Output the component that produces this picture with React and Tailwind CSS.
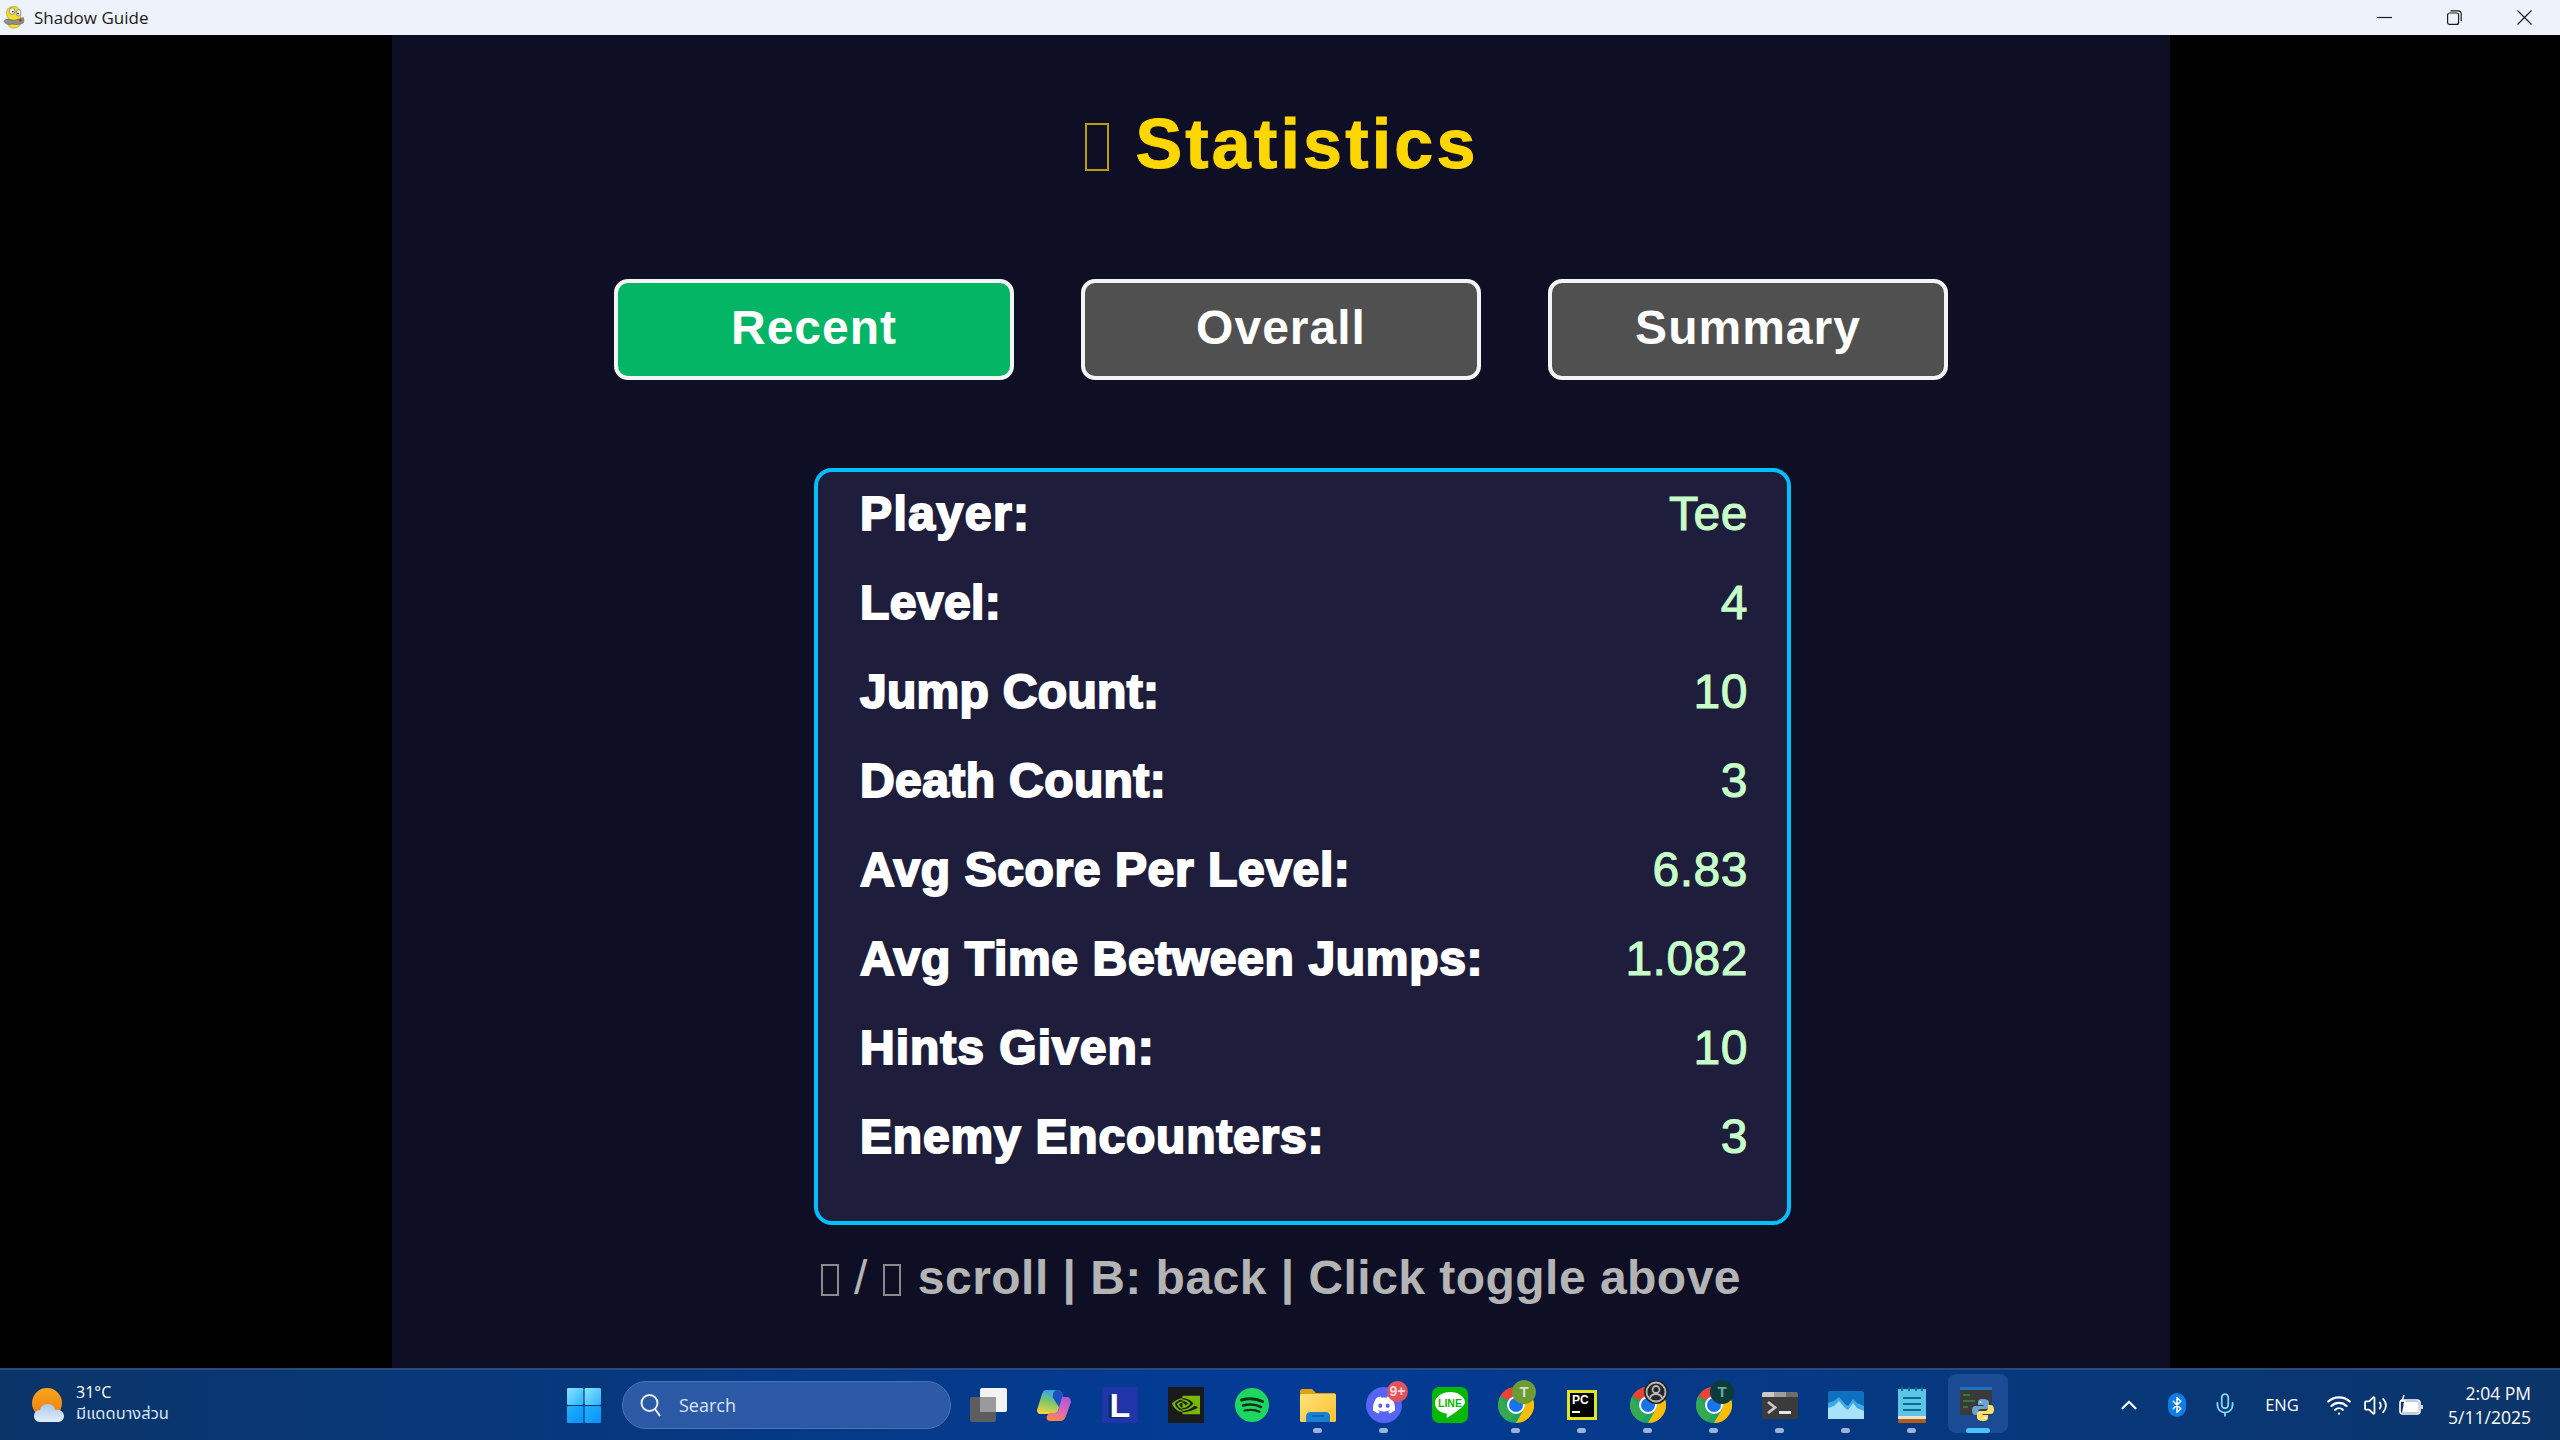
import { Bluetooth, ChevronUp, Mic, Volume2, Wifi } from "lucide-react";
import { FaDiscord } from "react-icons/fa6";
import { SiNvidia } from "react-icons/si";

const stats = [
  ["Player:", "Tee", "tracking-[1.5px]"],
  ["Level:", "4", "tracking-[0.4px]"],
  ["Jump Count:", "10", "tracking-[0.3px]"],
  ["Death Count:", "3", "tracking-[0.4px]"],
  ["Avg Score Per Level:", "6.83", "tracking-[0.6px]"],
  ["Avg Time Between Jumps:", "1.082", "tracking-[0.65px]"],
  ["Hints Given:", "10", "tracking-[1px]"],
  ["Enemy Encounters:", "3", "tracking-[0.8px]"],
];

function PygameLogo() {
  return (
    <svg width="22" height="25" viewBox="0 0 24 26">
      <path d="M5 4c2-3 8-4 11-2 3 2 4 6 3 10 1 4 1 8-2 11-3 2-8 2-10 0-2-3-2-6-1-9C4 11 3 7 5 4z" fill="#f2dc2c" stroke="#b7a21a" strokeWidth="0.8" />
      <ellipse cx="10" cy="6" rx="3" ry="3.6" fill="#fff" stroke="#555" strokeWidth="0.7" />
      <ellipse cx="17" cy="8" rx="2.6" ry="3.4" fill="#fff" stroke="#555" strokeWidth="0.7" />
      <circle cx="10.5" cy="6.5" r="1" fill="#222" />
      <circle cx="16.5" cy="8.5" r="1" fill="#222" />
      <path d="M1 17c2-3 6-2 10-1 4 0 8-2 11-3 1 2 1 4 0 6-4 2-8 2-12 1-3 1-7 1-9-3z" fill="#8c8f8c" stroke="#555" strokeWidth="0.6" />
      <circle cx="19" cy="16" r="1.3" fill="#c22" />
    </svg>
  );
}

function Tofu({ className }) {
  return <span className={`inline-block box-border ${className}`} />;
}

function TitleBar() {
  return (
    <div className="h-[35px] flex items-center bg-[#eef2fa] shrink-0">
      <div className="w-[34px] flex justify-start pl-[3px]">
        <PygameLogo />
      </div>
      <span className="text-[17px] text-[#1a1a1a] font-['Open_Sans',sans-serif]">Shadow Guide</span>
      <div className="ml-auto flex items-center pr-[28px] gap-[55px] text-[#1c1c1c]">
        <svg width="15" height="15" viewBox="0 0 15 15">
          <path d="M0 7.5h15" stroke="currentColor" strokeWidth="1.2" />
        </svg>
        <svg width="15" height="15" viewBox="0 0 15 15" fill="none" stroke="currentColor" strokeWidth="1.2">
          <rect x="0.6" y="3" width="11" height="11.4" rx="2" />
          <path d="M3.5 0.8h7.5a3.2 3.2 0 0 1 3.2 3.2v7" />
        </svg>
        <svg width="15" height="15" viewBox="0 0 15 15">
          <path d="M0.5 0.5l14 14M14.5 0.5l-14 14" stroke="currentColor" strokeWidth="1.2" />
        </svg>
      </div>
    </div>
  );
}

function ToggleButton({ label, active }) {
  return (
    <button
      className={`w-[400px] h-[101px] rounded-[14px] border-[4px] border-[#f4f4f4] text-white text-[48px] font-bold tracking-[1px] pb-[4px] ${
        active ? "bg-[#03b565]" : "bg-[#505050]"
      }`}
    >
      {label}
    </button>
  );
}

function GamePanel() {
  return (
    <div className="flex-1 bg-black flex min-h-0">
      <div className="w-[1778px] ml-[392px] bg-[#0e0f24] flex flex-col font-['Liberation_Sans',sans-serif]">
        {/* TITLE */}
        <div className="h-[218px] pl-[2px] flex items-center justify-center gap-[26px] text-[#ffd700] text-[70px] font-bold tracking-[3.2px] [-webkit-text-stroke:1px_#ffd700]">
          <Tofu className="w-[24px] h-[48px] border-[2px] border-[#b89c08] mt-[6px]" />
          <span>Statistics</span>
        </div>

        {/* TOGGLES */}
        <div className="mt-[26px] flex justify-center gap-[67px]">
          <ToggleButton label="Recent" active />
          <ToggleButton label="Overall" />
          <ToggleButton label="Summary" />
        </div>

        {/* STATS */}
        <div className="mt-[88px] ml-[422px] w-[977px] h-[757px] box-border rounded-[18px] border-[4px] border-[#00bfff] bg-[#1e1e3c] pl-[42px] pr-[39px] flex flex-col">
          {stats.map(([label, value, track], i) => (
            <div key={label} className={`h-[89px] flex items-center justify-between shrink-0 ${i === 0 ? "-mt-[3px]" : ""}`}>
              <span className={`text-[48px] font-bold text-white [-webkit-text-stroke:2px_#ffffff] ${track}`}>{label}</span>
              <span className="text-[48px] text-[#c8ffc8] tracking-[0.5px] [-webkit-text-stroke:1px_#c8ffc8]">{value}</span>
            </div>
          ))}
        </div>

        {/* FOOTER */}
        <div className="h-[100px] pt-[5px] flex items-center justify-center text-[48px] font-bold text-[#b4b4b4] tracking-[0.47px]">
          <Tofu className="w-[18px] h-[32px] border-[2px] border-[#8a8a8a] mt-[4px]" />
          <span className="mx-[15px] font-normal">/</span>
          <Tofu className="w-[18px] h-[32px] border-[2px] border-[#8a8a8a] mt-[4px]" />
          <span className="ml-[17px]">scroll | B: back | Click toggle above</span>
        </div>
      </div>
    </div>
  );
}

function Weather() {
  return (
    <div className="w-[551px] pl-[32px] flex items-center shrink-0">
      <svg width="33" height="34" viewBox="0 0 33 34">
        <defs>
          <linearGradient id="sun" x1="0" y1="0" x2="0" y2="1">
            <stop offset="0" stopColor="#f9a61c" />
            <stop offset="1" stopColor="#f07a12" />
          </linearGradient>
          <linearGradient id="cloud" x1="0" y1="0" x2="0" y2="1">
            <stop offset="0" stopColor="#a9c8ee" />
            <stop offset="1" stopColor="#e3eefb" />
          </linearGradient>
        </defs>
        <ellipse cx="15" cy="15" rx="15" ry="15" fill="url(#sun)" />
        <path d="M8 34c-4 0-6-3-6-6s2-6 6-6c1-4 4-6 8-6s7 3 7 6c5-1 9 2 9 6s-3 6-7 6z" fill="url(#cloud)" />
      </svg>
      <div className="ml-[11px] flex flex-col text-white font-['Open_Sans','Noto_Sans',sans-serif] leading-none">
        <span className="text-[16px] leading-[22px] -mt-[4px]">31°C</span>
        <span className="text-[16.5px] leading-[22px] text-[#d8e4f4] font-['Noto_Sans_Thai','Noto_Sans',sans-serif]">มีแดดบางส่วน</span>
      </div>
    </div>
  );
}

function StartButton() {
  return (
    <div className="w-[66px] flex items-center justify-center shrink-0">
      <svg width="34" height="35" viewBox="0 0 34 35">
        <defs>
          <linearGradient id="winA" x1="0" y1="0" x2="1" y2="1">
            <stop offset="0" stopColor="#8be4ff" />
            <stop offset="1" stopColor="#28b4f8" />
          </linearGradient>
          <linearGradient id="winB" x1="0" y1="0" x2="1" y2="1">
            <stop offset="0" stopColor="#1fb2f7" />
            <stop offset="1" stopColor="#0a8fff" />
          </linearGradient>
        </defs>
        <rect x="0" y="0" width="16.4" height="16.9" rx="1.2" fill="url(#winA)" />
        <rect x="17.6" y="0" width="16.4" height="16.9" rx="1.2" fill="url(#winA)" />
        <rect x="0" y="18.1" width="16.4" height="16.9" rx="1.2" fill="url(#winB)" />
        <rect x="17.6" y="18.1" width="16.4" height="16.9" rx="1.2" fill="url(#winB)" />
      </svg>
    </div>
  );
}

function SearchBox() {
  return (
    <div className="ml-[5px] w-[329px] h-[48px] rounded-full bg-[#2c5aa6] border border-[#4a73b5] flex items-center pl-[17px] shrink-0">
      <svg width="22" height="24" viewBox="0 0 22 24" fill="none" stroke="#e6eefb" strokeWidth="2">
        <circle cx="9.5" cy="10" r="8" />
        <path d="M15 16l5 7" />
      </svg>
      <span className="ml-[17px] text-[18px] text-[#dce6f6] font-['Open_Sans',sans-serif]">Search</span>
    </div>
  );
}

function TaskView() {
  return (
    <svg width="37" height="35" viewBox="0 0 37 35">
      <rect x="0" y="9" width="26" height="25" rx="2" fill="#5d5d60" />
      <rect x="10" y="0" width="27" height="24" rx="2" fill="#f3f3f3" />
      <rect x="10" y="9" width="16" height="15" fill="#9a9a9c" />
    </svg>
  );
}

function Copilot() {
  return (
    <svg width="34" height="31" viewBox="0 0 34 31">
      <defs>
        <linearGradient id="copA" x1="0.6" y1="0" x2="0.3" y2="1">
          <stop offset="0" stopColor="#2aa1f2" />
          <stop offset="0.5" stopColor="#7cc96a" />
          <stop offset="1" stopColor="#f5d23a" />
        </linearGradient>
        <linearGradient id="copB" x1="0.6" y1="0" x2="0.3" y2="1">
          <stop offset="0" stopColor="#b058d8" />
          <stop offset="0.6" stopColor="#e56ab0" />
          <stop offset="1" stopColor="#f78a3a" />
        </linearGradient>
      </defs>
      <path d="M9 0h11c3 0 5 2 6 5l-5 16c-1 2-3 3-5 3H3c-2 0-3-2-3-4L5 4c1-2 2-4 4-4z" fill="url(#copA)" />
      <path d="M24 7h6c3 0 4 3 4 5l-5 14c-1 3-3 5-6 5H13c-3 0-4-3-3-5l2-3h5c3 0 4-2 5-4z" fill="url(#copB)" />
      <path d="M20 0c3 0 5 2 6 5l-4 12-6-9c-1-4 1-8 4-8z" fill="#1c4fc0" />
    </svg>
  );
}

function LTile() {
  return (
    <div className="w-[36px] h-[36px] bg-[#2036a8] flex items-center justify-center text-white text-[34px] font-bold font-['Liberation_Sans',sans-serif] leading-none [text-shadow:-3px_1px_0_#0d2a5c]">
      L
    </div>
  );
}

function NvidiaTile() {
  return (
    <div className="w-[36px] h-[36px] bg-[#1a1a1a] flex items-center justify-center text-[#76b900]">
      <SiNvidia size={28} />
    </div>
  );
}

function Spotify() {
  return (
    <svg width="34" height="34" viewBox="0 0 34 34" fill="none" stroke="#14301c" strokeLinecap="round">
      <circle cx="17" cy="17" r="17" fill="#1ed760" stroke="none" />
      <path d="M6.5 12c7-2 15-1.5 21 1.5" strokeWidth="3" />
      <path d="M8 17.5c6-1.5 13-1 18 1.5" strokeWidth="2.6" />
      <path d="M9.5 22.5c5-1 11-.8 15 1.2" strokeWidth="2.2" />
    </svg>
  );
}

function Folder() {
  return (
    <svg width="36" height="33" viewBox="0 0 36 33">
      <defs>
        <linearGradient id="fold" x1="0" y1="0" x2="1" y2="1">
          <stop offset="0" stopColor="#ffe27a" />
          <stop offset="1" stopColor="#fcc02e" />
        </linearGradient>
      </defs>
      <path d="M0 2c0-1 1-2 2-2h10l4 4h18c1 0 2 1 2 2v2H0z" fill="#e0a213" />
      <rect x="0" y="5" width="36" height="28" rx="1.5" fill="url(#fold)" />
      <path d="M6 33v-6c0-2 2-4 4-4h16c2 0 4 2 4 4v6z" fill="#1a82d0" />
      <path d="M12 27h12" stroke="#0d5c9e" strokeWidth="1.5" />
    </svg>
  );
}

function Discord() {
  return (
    <div className="relative w-[36px] h-[36px] rounded-full bg-[#5865f2] flex items-center justify-center text-white">
      <FaDiscord size={24} />
      <span className="absolute -top-[6px] -right-[6px] w-[21px] h-[21px] rounded-full bg-[#e3535a] text-[#ffd9d9] text-[14px] font-bold leading-[20px] text-center font-['Liberation_Sans',sans-serif]">
        9+
      </span>
    </div>
  );
}

function LineTile() {
  return (
    <svg width="36" height="36" viewBox="0 0 36 36">
      <rect width="36" height="36" rx="7" fill="#06b900" />
      <path d="M18 5C9.5 5 3 10 3 16c0 5.5 4.5 9.5 11 10.500.8.2 1 .5.8 1.300l-.2 2.200c0 .5.3.8 1 .4 5-3 12-7.500 15.400-11.400C32.500 17 33 16 33 15.500 33 10 26.500 5 18 5z" fill="#fff" />
      <text x="18" y="20" textAnchor="middle" fontSize="10.5" fontWeight="700" fill="#06b900" fontFamily="Liberation Sans, sans-serif">LINE</text>
    </svg>
  );
}

function Chrome({ badge, badgeText, textColor = "#d6e0c8", ring }) {
  return (
    <div className="relative w-[36px] h-[36px]">
      <svg width="36" height="36" viewBox="0 0 36 36">
        <circle cx="18" cy="18" r="18" fill="#1da462" />
        <path d="M18 0a18 18 0 0 1 15.590 9H18a9 9 0 0 0-7.800 4.500L2.410 9A18 18 0 0 1 18 0z" fill="#ea4335" />
        <path d="M2.410 9l7.800 13.500A9 9 0 0 0 18 27l-7.800 7.100A18 18 0 0 1 2.410 9z" fill="#34a853" />
        <path d="M33.590 9A18 18 0 0 1 18 36l7.800-13.500A9 9 0 0 0 18 9z" fill="#fbbc04" />
        <circle cx="18" cy="18" r="9" fill="#fff" />
        <circle cx="18" cy="18" r="7" fill="#1a73e8" />
      </svg>
      <span
        className="absolute -top-[7px] left-[14px] w-[24px] h-[24px] rounded-full flex items-center justify-center text-[15px] font-bold font-['Liberation_Sans',sans-serif]"
        style={{ background: badge, color: textColor }}
      >
        {badgeText}
        {ring && (
          <svg width="22" height="22" viewBox="0 0 22 22" fill="none" stroke="#b9b9b9" strokeWidth="1.8">
            <circle cx="11" cy="11" r="9.5" />
            <circle cx="11" cy="8.5" r="3.5" />
            <path d="M5 17c1-3 3.500-4 6-4s5 1 6 4" />
          </svg>
        )}
      </span>
    </div>
  );
}

function PyCharm() {
  return (
    <div className="w-[30px] h-[30px] bg-[#e2e51e] p-[3px]">
      <div className="w-full h-full bg-black flex flex-col pl-[2px] pt-[1px] text-white text-[12px] font-bold leading-[13px] font-['Liberation_Sans',sans-serif]">
        PC
        <span className="block w-[8px] h-[2px] bg-white mt-[4px]" />
      </div>
    </div>
  );
}

function Terminal() {
  return (
    <svg width="36" height="27" viewBox="0 0 36 27">
      <rect width="36" height="27" rx="2" fill="#3b3b3b" />
      <path d="M0 2a2 2 0 0 1 2-2h10v5H0z" fill="#c9c9c9" />
      <rect x="12" y="0" width="12" height="5" fill="#9e9e9e" />
      <path d="M24 0h10a2 2 0 0 1 2 2v3H24z" fill="#6e6e6e" />
      <path d="M6 10l7 5.5-7 5.5" fill="none" stroke="#c9c9c9" strokeWidth="2.8" />
      <rect x="17" y="19" width="12" height="3" fill="#e6e6e6" />
    </svg>
  );
}

function ChartTile() {
  return (
    <svg width="36" height="28" viewBox="0 0 36 28">
      <rect width="36" height="28" rx="2" fill="#0f70c0" />
      <path d="M0 12l6-2 5-4 6 7 3 2 5-7 4 4 7 3v13H0z" fill="#3fa9e6" />
      <path d="M0 17l6-2 5-5 6 7 3 2 5-7 4 5 7 3v8H0z" fill="#a8e2f8" />
    </svg>
  );
}

function Notepad() {
  return (
    <svg width="28" height="36" viewBox="0 0 28 36">
      <rect x="0" y="2" width="28" height="30" fill="#5cc4e4" />
      <rect x="0" y="29" width="28" height="3" fill="#e8e0d0" />
      <rect x="0" y="32" width="28" height="4" rx="1" fill="#b35a1f" />
      <path d="M4 4V0M11 4V0M18 4V0M24 4V0" stroke="#0f6d8c" strokeWidth="2" />
      <path d="M5 11h18M5 17h18M5 23h18" stroke="#0f6d8c" strokeWidth="2" />
    </svg>
  );
}

function PythonApp() {
  return (
    <div className="relative w-[36px] h-[36px]">
      <svg width="32" height="28" viewBox="0 0 32 28" className="absolute left-0 top-0">
        <rect width="32" height="28" fill="#3a3a3a" />
        <rect width="32" height="3" fill="#1e6fb8" />
        <path d="M3 8h7M3 14h12M3 20h5" stroke="#2f8f3a" strokeWidth="1.5" />
      </svg>
      <svg width="24" height="24" viewBox="0 0 24 24" className="absolute left-[11px] top-[11px]">
        <path d="M12 1C8 1 7 2.500 7 4.500V7h5.500v1h-8C2 8 1 10 1 12.500 1 15 2 17 4.500 17H7v-3c0-2 1.500-3 3-3h5c1.500 0 3-1 3-3V4.500C18 2.500 16 1 12 1z" fill="#6aa3d4" />
        <g transform="rotate(180 12 12)">
          <path d="M12 1C8 1 7 2.500 7 4.500V7h5.500v1h-8C2 8 1 10 1 12.500 1 15 2 17 4.500 17H7v-3c0-2 1.500-3 3-3h5c1.500 0 3-1 3-3V4.500C18 2.500 16 1 12 1z" fill="#ffdf6a" />
        </g>
        <circle cx="9.5" cy="4" r="1" fill="#fff" />
        <circle cx="14.5" cy="20" r="1" fill="#fff" />
      </svg>
    </div>
  );
}

function Tile({ children, running, active }) {
  return (
    <div className="relative w-[66px] h-full flex items-center justify-center shrink-0">
      {active && <div className="absolute left-[3px] right-[3px] top-[4px] bottom-[7px] rounded-[8px] bg-[#2a58a3]/60" />}
      <div className="relative">{children}</div>
      {running && <span className="absolute left-[28px] bottom-[7px] w-[9px] h-[5px] rounded-full bg-[#9db4d8]" />}
      {active && <span className="absolute left-[21px] bottom-[7px] w-[24px] h-[5px] rounded-full bg-[#4cc2ff]" />}
    </div>
  );
}

function Tray() {
  return (
    <div className="ml-auto pr-[29px] flex items-center text-white font-['Open_Sans',sans-serif]">
      <div className="w-[48px] flex justify-center">
        <ChevronUp size={26} strokeWidth={2} />
      </div>
      <div className="w-[48px] flex justify-center">
        <div className="w-[18px] h-[24px] rounded-[9px] bg-[#0f7de8] flex items-center justify-center">
          <Bluetooth size={18} strokeWidth={2} />
        </div>
      </div>
      <div className="w-[48px] flex justify-center text-[#7fd6f2]">
        <Mic size={26} strokeWidth={1.7} />
      </div>
      <div className="w-[66px] text-center text-[16.5px]">ENG</div>
      <div className="w-[42px] ml-[3px] flex justify-center">
        <Wifi size={26} strokeWidth={2} />
      </div>
      <div className="w-[30px] flex justify-center">
        <Volume2 size={25} strokeWidth={1.7} />
      </div>
      <div className="w-[42px] flex justify-center">
        <svg width="24" height="20" viewBox="0 0 24 20" fill="none" stroke="#fff" strokeWidth="1.6">
          <rect x="1" y="5" width="20" height="14" rx="3" />
          <path d="M23 10v4" />
          <path d="M4 17l2-10h13v10z" fill="#fff" />
          <path d="M5 0L3 6h3l-1 4" strokeWidth="1.4" />
        </svg>
      </div>
      <div className="w-[99px] flex flex-col items-end text-[17.5px] leading-[24px]">
        <span>2:04 PM</span>
        <span>5/11/2025</span>
      </div>
    </div>
  );
}

function Taskbar() {
  return (
    <div className="h-[72px] shrink-0 border-t-[2px] border-[#2a4a7e] bg-linear-to-r from-[#0b3569] via-[#033b97] to-[#0b3569] flex items-stretch">
      <Weather />
      <StartButton />
      <div className="flex items-center shrink-0">
        <SearchBox />
      </div>
      <div className="ml-[4px] flex shrink-0">
        <Tile><TaskView /></Tile>
        <Tile><Copilot /></Tile>
        <Tile><LTile /></Tile>
        <Tile><NvidiaTile /></Tile>
        <Tile><Spotify /></Tile>
        <Tile running><Folder /></Tile>
        <Tile running><Discord /></Tile>
        <Tile><LineTile /></Tile>
        <Tile running><Chrome badge="#6d9b35" badgeText="T" /></Tile>
        <Tile running><PyCharm /></Tile>
        <Tile running><Chrome badge="#23252b" ring /></Tile>
        <Tile running><Chrome badge="#0b3b3a" badgeText="T" textColor="#6fa8a0" /></Tile>
        <Tile running><Terminal /></Tile>
        <Tile running><ChartTile /></Tile>
        <Tile running><Notepad /></Tile>
        <Tile active><PythonApp /></Tile>
      </div>
      <Tray />
    </div>
  );
}

export default function App() {
  return (
    <div className="w-[2560px] h-[1440px] flex flex-col overflow-hidden">
      <TitleBar />
      <GamePanel />
      <Taskbar />
    </div>
  );
}
